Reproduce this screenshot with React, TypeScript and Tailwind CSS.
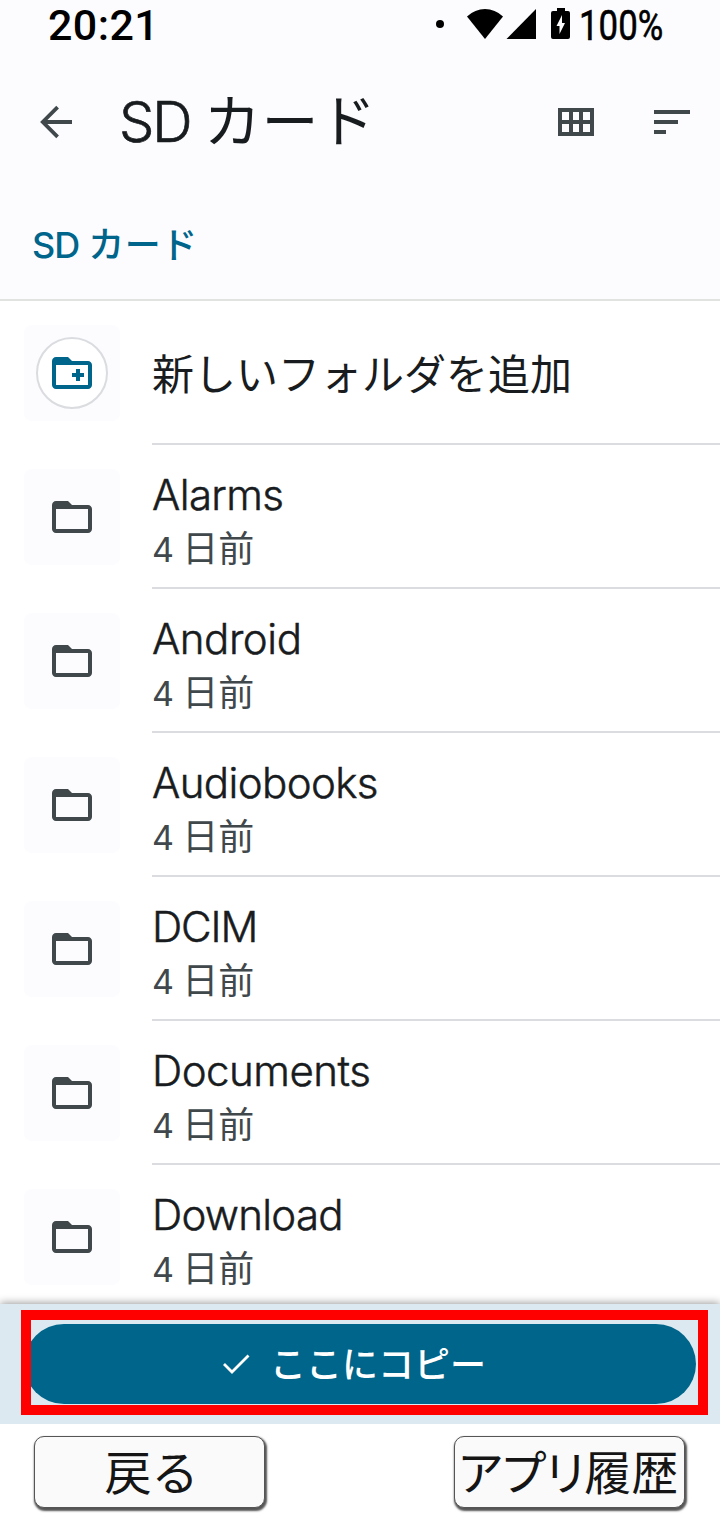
const folders = ["Alarms", "Android", "Audiobooks", "DCIM", "Documents", "Download"];

const tracking: Record<string, string> = {
  Alarms: "tracking-[-0.6px]",
  Android: "tracking-[-0.45px]",
  Audiobooks: "tracking-[-0.6px]",
  DCIM: "tracking-[-1.1px]",
  Documents: "tracking-[-0.5px]",
  Download: "tracking-[-0.75px]",
};

function StatusBar() {
  return (
    <div className="flex h-12 items-start font-['Roboto',sans-serif] text-black">
      <span className="ml-12 mt-[1px] h-12 w-[382px] shrink-0 text-[43px] font-medium leading-[49px] tracking-[0.4px]">20:21</span>
      <svg className="h-12 w-[140px] shrink-0" viewBox="430 0 140 48">
        <circle cx="440" cy="24" r="4" />
        <path d="M467 16.5Q475 9 485 9T503 16.5L485 39Z" />
        <path d="M506.500 39H536V9Z" />
        <path fillRule="evenodd" d="M557 8h8v3h3a2 2 0 0 1 2 2v24a2 2 0 0 1-2 2h-15a2 2 0 0 1-2-2V13a2 2 0 0 1 2-2h4ZM562 15l-5.500 11h3v8l5.500-11h-3Z" />
      </svg>
      <span className="ml-[9px] mt-[1px] origin-left scale-x-[0.81] text-[43px] leading-[49px] [-webkit-text-stroke:0.6px_black]">100%</span>
    </div>
  );
}

function Toolbar() {
  return (
    <header className="flex h-36 items-center text-[#40484c]">
      <svg className="ml-8 mt-[3px] h-12 w-12 shrink-0" viewBox="0 0 24 24" fill="none" stroke="currentColor" strokeWidth="1.900">
        <path d="M20 12H5.500M12.800 4.600 5.400 12l7.400 7.400" />
      </svg>
      <h1 className="-mt-[2px] ml-[39px] flex-1 whitespace-pre font-['Inter',sans-serif] text-[56px] font-light leading-[80px] text-[#191c1e]">
        <span className="tracking-[-2.2px] [-webkit-text-stroke:0.7px_#191c1e]">SD </span>
        <span className="font-['Noto_Sans_CJK_JP',sans-serif] text-[57px] font-normal tracking-[0.6px]">カード</span>
      </h1>
      <svg className="mt-1 h-12 w-12 shrink-0" viewBox="0 0 48 48" fill="currentColor" fillRule="evenodd">
        <path d="M6 10h36v28H6ZM10 14v8h7v-8ZM21 14v8h6v-8ZM31 14v8h7v-8ZM10 26v8h7v-8ZM21 26v8h6v-8ZM31 26v8h7v-8Z" />
      </svg>
      <svg className="ml-12 mr-6 mt-1 h-12 w-12 shrink-0" viewBox="0 0 48 48" fill="currentColor">
        <path d="M6 12h36v4H6ZM6 22h24v4H6ZM6 32h12v4H6Z" />
      </svg>
    </header>
  );
}

function FolderIcon({ add = false }: { add?: boolean }) {
  return (
    <svg className="h-12 w-12 shrink-0" viewBox="0 0 24 24" fill="currentColor">
      <path d="M20 6h-8l-2-2H4c-1.100 0-2 .9-2 2v12c0 1.100.9 2 2 2h16c1.100 0 2-.9 2-2V8c0-1.100-.9-2-2-2Zm0 12H4V8h16Z" />
      {add && <path d="M12 12h2v-2h2v2h2v2h-2v2h-2v-2h-2Z" />}
    </svg>
  );
}

function FolderRow({ name }: { name: string }) {
  return (
    <li className="flex h-36 shrink-0 pl-6">
      <div className="mt-6 flex h-24 w-24 shrink-0 items-center justify-center rounded-lg bg-[#fcfcff] text-[#40484c]">
        <FolderIcon />
      </div>
      <div className="ml-8 flex flex-1 flex-col border-b-2 border-[#dadce0] pt-5">
        <span className={`h-[57px] font-['Inter',sans-serif] text-[42px] font-light leading-[59px] text-[#191c1e] [-webkit-text-stroke:0.5px_#191c1e] ${tracking[name]}`}>{name}</span>
        <span className="whitespace-pre font-['Inter',sans-serif] text-[35px] font-normal leading-[48px] text-[#40484c]">
          <span className="text-[34px] tracking-[-0.7px]">4 </span>
          <span className="font-['Noto_Sans_CJK_JP',sans-serif] text-[36px]">日前</span>
        </span>
      </div>
    </li>
  );
}

const navButton =
  "flex h-[72px] w-[231px] items-center justify-center rounded-[10px] border border-[#555] bg-[#fafafa] shadow-[1px_2px_2px_1px_#555] text-[#151515]";

export default function App() {
  return (
    <div className="flex h-[1520px] w-[720px] flex-col overflow-hidden bg-white font-['Noto_Sans_CJK_JP',sans-serif]">
      <div className="h-[301px] shrink-0 border-b-2 border-[#e1e3e1] bg-[#fcfcff]">
        <StatusBar />
        <Toolbar />
        <div className="whitespace-pre pl-8 pt-[26px] font-['Inter','Noto_Sans_CJK_JP',sans-serif] text-[36px] font-medium leading-[54px] text-[#00658b]">
          <span className="tracking-[-0.9px]">SD </span>
          <span className="tracking-[0.6px]">カード</span>
        </div>
      </div>
      <ul className="flex h-[1003px] shrink-0 flex-col overflow-hidden">
        <li className="flex h-36 shrink-0 pl-6">
          <div className="mt-6 flex h-24 w-24 shrink-0 items-center justify-center rounded-lg bg-[#fcfcff] text-[#00658b]">
            <div className="flex h-[72px] w-[72px] items-center justify-center rounded-full border-2 border-[#dadce0] bg-white">
              <FolderIcon add />
            </div>
          </div>
          <div className="ml-8 flex-1 border-b-2 border-[#dadce0] pt-10 text-[42px] leading-[62px] text-[#191c1e]">新しいフォルダを追加</div>
        </li>
        {folders.map((name) => (
          <FolderRow key={name} name={name} />
        ))}
      </ul>
      <div className="relative h-[120px] shrink-0 bg-[#dce9f1] px-6 pt-5 shadow-[0_-1px_8px_rgba(0,0,0,0.4)]">
        <button className="flex h-20 w-[672px] items-center rounded-full bg-[#00658b] text-white">
          <svg className="ml-[198px] h-7 w-7" viewBox="0 0 28 28" fill="none" stroke="currentColor" strokeWidth="2.800">
            <path d="m2 14 8 8L26.500 5.500" />
          </svg>
          <span className="-mt-[4px] ml-5 text-[36px] font-medium leading-[54px]">ここにコピー</span>
        </button>
        <div className="absolute left-[21px] top-[6px] h-[105px] w-[687px] border-[10px] border-[#ff0000]" />
      </div>
      <nav className="relative flex h-24 shrink-0 justify-between bg-white pl-[34px] pr-[35px] pt-3">
        <button className={`${navButton} pb-[5px] pl-[4px] text-[47px] leading-[70px]`}>戻る</button>
        <button className={`${navButton} whitespace-nowrap pb-[5px] pr-[2px] text-[47px] leading-[70px] [font-feature-settings:'palt']`}>アプリ履歴</button>
      </nav>
    </div>
  );
}
